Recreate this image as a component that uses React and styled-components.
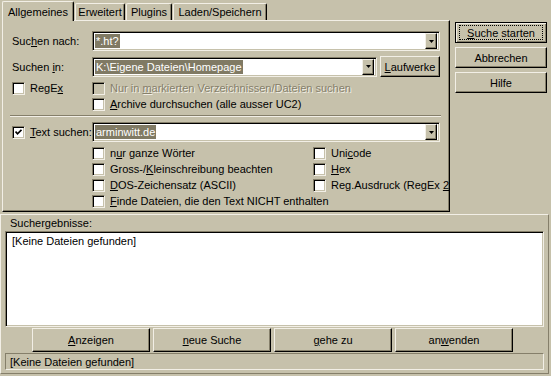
import React from 'react'
import styled, { createGlobalStyle } from 'styled-components'

const FACE = '#c6c1ab'
const LIGHT = '#f2efe6'
const SHADOW = '#857f6a'
const DARK = '#000'
const SELECT = '#807a64'

const GlobalStyle = createGlobalStyle`
  html, body { margin: 0; padding: 0; background: ${FACE}; }
  body {
    font-family: "Liberation Sans", Arial, sans-serif;
    font-size: 11px;
    color: #000;
  }
`

const Window = styled.div`
  width: 551px;
  height: 376px;
  background: ${FACE};
  display: flex;
  flex-direction: column;
  overflow: hidden;
`
const Top = styled.div`
  display: flex;
  height: 214px;
  padding-left: 2px;
`
const TabArea = styled.div`
  width: 448px;
  display: flex;
  flex-direction: column;
`
const TabRow = styled.div`
  display: flex;
  align-items: flex-end;
  height: 20px;
  position: relative;
  z-index: 1;
`
const Tab = styled.div`
  box-sizing: border-box;
  width: ${p => p.$w}px;
  height: ${p => (p.$active ? 20 : 17)}px;
  margin-left: ${p => (p.$active ? 0 : 1)}px;
  margin-bottom: ${p => (p.$active ? -1 : 0)}px;
  border-top: 1px solid ${LIGHT};
  border-left: 1px solid ${LIGHT};
  border-right: 1px solid ${DARK};
  box-shadow: inset -1px 0 ${SHADOW};
  border-top-left-radius: 2px;
  border-top-right-radius: 2px;
  background: ${FACE};
  display: flex;
  align-items: center;
  justify-content: center;
  white-space: nowrap;
`
const Panel = styled.div`
  box-sizing: border-box;
  height: 192px;
  border: 1px solid;
  border-color: ${LIGHT} ${DARK} ${DARK} ${LIGHT};
  box-shadow: inset -1px -1px ${SHADOW};
  padding: 10px 8px 0 9px;
  overflow: hidden;
  display: flex;
  flex-direction: column;
  white-space: nowrap;
`
const FieldRow = styled.div`
  display: flex;
  align-items: center;
  height: ${p => p.$h || 20}px;
  margin-top: ${p => p.$mt || 0}px;
`
const LabelCell = styled.div`
  width: 80px;
  flex: none;
  display: flex;
  align-items: center;
`
const CheckRow = styled.div`
  display: flex;
  align-items: center;
  height: 16px;
  margin-top: ${p => p.$mt || 0}px;
`
const Item = styled.label`
  display: flex;
  align-items: center;
  gap: 5px;
  color: ${p => (p.$disabled ? SHADOW : '#000')};
  text-shadow: ${p => (p.$disabled ? `1px 1px ${LIGHT}` : 'none')};
`
const Box = styled.span`
  box-sizing: border-box;
  width: 13px;
  height: 13px;
  flex: none;
  background: ${p => (p.$disabled ? FACE : '#fff')};
  border: 1px solid;
  border-color: ${SHADOW} ${LIGHT} ${LIGHT} ${SHADOW};
  box-shadow: inset 1px 1px ${DARK}, inset -1px -1px ${FACE};
  display: flex;
  align-items: center;
  justify-content: center;
`
const U = styled.span`
  text-decoration: underline;
  text-underline-offset: 1px;
`
const Combo = styled.div`
  box-sizing: border-box;
  width: ${p => p.$w}px;
  height: 20px;
  flex: none;
  background: #fff;
  border: 1px solid;
  border-color: ${SHADOW} ${LIGHT} ${LIGHT} ${SHADOW};
  box-shadow: inset 1px 1px ${DARK}, inset -1px -1px ${FACE};
  display: flex;
  align-items: center;
  padding: 2px;
`
const Selected = styled.span`
  background: ${SELECT};
  color: #fff;
  line-height: 14px;
  padding: 0 1px;
`
const DropBtn = styled.span`
  box-sizing: border-box;
  margin-left: auto;
  width: 12px;
  height: 16px;
  background: ${FACE};
  border: 1px solid;
  border-color: ${LIGHT} ${DARK} ${DARK} ${LIGHT};
  box-shadow: inset -1px -1px ${SHADOW};
  display: flex;
  align-items: center;
  justify-content: center;
`
const Separator = styled.div`
  width: 431px;
  height: 0;
  margin: 3px 0 0 -2px;
  border-top: 1px solid ${SHADOW};
  border-bottom: 1px solid ${LIGHT};
`
const Options = styled.div`
  display: grid;
  grid-template-columns: 221px auto;
  grid-template-rows: repeat(4, 16px);
  grid-auto-flow: column;
  padding-left: 80px;
  margin-top: 3px;
  align-items: center;
`
const Side = styled.div`
  width: 92px;
  margin-left: 5px;
  padding-top: 22px;
  display: flex;
  flex-direction: column;
  gap: 4px;
`
const Button = styled.button`
  position: relative;
  box-sizing: border-box;
  width: ${p => p.$w || 92}px;
  height: ${p => p.$h || 21}px;
  flex: none;
  margin-left: ${p => p.$ml || 0}px;
  padding: 0;
  background: ${FACE};
  font: inherit;
  color: #000;
  border: 1px solid;
  border-color: ${p => (p.$default ? DARK : `${LIGHT} ${DARK} ${DARK} ${LIGHT}`)};
  box-shadow: ${p =>
    p.$default
      ? `inset 1px 1px ${LIGHT}, inset -1px -1px ${SHADOW}`
      : `inset -1px -1px ${SHADOW}`};
  &::after {
    content: '';
    display: ${p => (p.$default ? 'block' : 'none')};
    position: absolute;
    inset: 2px 3px;
    border: 1px dotted #000;
  }
`
const Results = styled.div`
  box-sizing: border-box;
  height: 160px;
  margin-right: 2px;
  border: 1px solid;
  border-color: ${LIGHT} ${SHADOW} ${SHADOW} ${LIGHT};
  display: flex;
  flex-direction: column;
`
const GroupLabel = styled.div`
  height: 16px;
  padding-left: 9px;
  display: flex;
  align-items: center;
`
const List = styled.div`
  box-sizing: border-box;
  height: 96px;
  margin: 0 4px;
  background: #fff;
  border: 1px solid;
  border-color: ${SHADOW} ${LIGHT} ${LIGHT} ${SHADOW};
  box-shadow: inset 1px 1px ${DARK}, inset -1px -1px ${FACE};
  padding: 3px 6px;
`
const ButtonRow = styled.div`
  display: flex;
  gap: 3px;
  padding-left: 31px;
  margin-top: 1px;
`
const Status = styled.div`
  box-sizing: border-box;
  height: 17px;
  margin: 1px 4px 0 4px;
  border: 1px solid;
  border-color: ${SHADOW} ${LIGHT} ${LIGHT} ${SHADOW};
  padding-left: 4px;
  display: flex;
  align-items: center;
`

const Arrow = () => (
  <svg width="5" height="3" viewBox="0 0 5 3">
    <path d="M0 0h5L2.5 3z" fill="#000" />
  </svg>
)

const Check = ({ checked, disabled }) => (
  <Box $disabled={disabled}>
    {checked && (
      <svg width="7" height="7" viewBox="0 0 7 7">
        <path d="M0.5 2.5 L2.5 4.8 L6.5 0.8" stroke="#000" strokeWidth="1.7" fill="none" />
      </svg>
    )}
  </Box>
)

const CheckItem = ({ checked, disabled, children }) => (
  <Item $disabled={disabled}>
    <Check checked={checked} disabled={disabled} />
    <span>{children}</span>
  </Item>
)

const ComboBox = ({ w, value }) => (
  <Combo $w={w}>
    <Selected>{value}</Selected>
    <DropBtn>
      <Arrow />
    </DropBtn>
  </Combo>
)

const App = () => {
  return (
    <Window>
      <GlobalStyle />
      <Top>
        <TabArea>
          <TabRow>
            <Tab $active $w={72}>Allgemeines</Tab>
            <Tab $w={50}>Erweitert</Tab>
            <Tab $w={46}>Plugins</Tab>
            <Tab $w={94}>Laden/Speichern</Tab>
          </TabRow>
          <Panel>
            <FieldRow>
              <LabelCell>
                <span>Suc<U>h</U>en nach:</span>
              </LabelCell>
              <ComboBox w={348} value="*.ht?" />
            </FieldRow>
            <FieldRow $h={21} $mt={5}>
              <LabelCell>
                <span>Suchen <U>i</U>n:</span>
              </LabelCell>
              <ComboBox w={285} value="K:\Eigene Dateien\Homepage" />
              <Button $w={60} $ml={3}>
                <U>L</U>aufwerke
              </Button>
            </FieldRow>
            <CheckRow $mt={3}>
              <LabelCell>
                <CheckItem>
                  RegE<U>x</U>
                </CheckItem>
              </LabelCell>
              <CheckItem disabled>
                Nur in <U>m</U>arkierten Verzeichnissen/Dateien suchen
              </CheckItem>
            </CheckRow>
            <CheckRow>
              <LabelCell />
              <CheckItem>
                <U>A</U>rchive durchsuchen (alle ausser UC2)
              </CheckItem>
            </CheckRow>
            <Separator />
            <FieldRow $mt={5}>
              <LabelCell>
                <CheckItem checked>
                  <U>T</U>ext suchen:
                </CheckItem>
              </LabelCell>
              <ComboBox w={348} value="arminwitt.de" />
            </FieldRow>
            <Options>
              <CheckItem>
                n<U>u</U>r ganze Wörter
              </CheckItem>
              <CheckItem>
                Gross-/<U>K</U>leinschreibung beachten
              </CheckItem>
              <CheckItem>
                <U>D</U>OS-Zeichensatz (ASCII)
              </CheckItem>
              <CheckItem>
                <U>F</U>inde Dateien, die den Text NICHT enthalten
              </CheckItem>
              <CheckItem>
                Uni<U>c</U>ode
              </CheckItem>
              <CheckItem>
                <U>H</U>ex
              </CheckItem>
              <CheckItem>
                Reg.Ausdruck (RegEx <U>2</U>)
              </CheckItem>
            </Options>
          </Panel>
        </TabArea>
        <Side>
          <Button $default>
            <U>S</U>uche starten
          </Button>
          <Button>Abbrechen</Button>
          <Button>Hilfe</Button>
        </Side>
      </Top>
      <Results>
        <GroupLabel>Suchergebnisse:</GroupLabel>
        <List>[Keine Dateien gefunden]</List>
        <ButtonRow>
          <Button $w={118} $h={24}>
            <U>A</U>nzeigen
          </Button>
          <Button $w={118} $h={24}>
            <U>n</U>eue Suche
          </Button>
          <Button $w={118} $h={24}>
            <U>g</U>ehe zu
          </Button>
          <Button $w={118} $h={24}>
            an<U>w</U>enden
          </Button>
        </ButtonRow>
        <Status>[Keine Dateien gefunden]</Status>
      </Results>
    </Window>
  )
}

export default App
